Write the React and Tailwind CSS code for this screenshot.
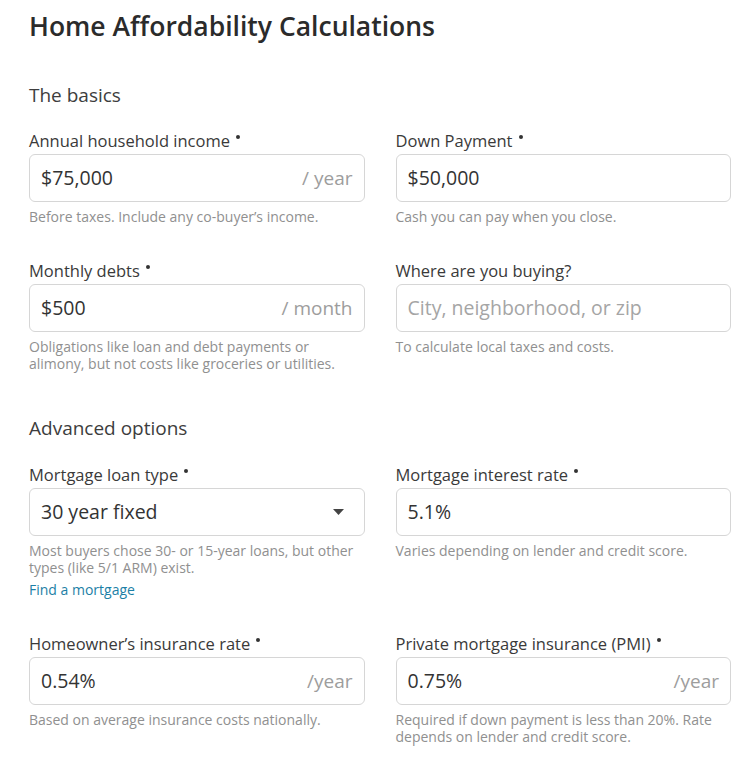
import React from "react";

const Field = ({ label, required, value, placeholder, suffix, select, help, link }) => {
  return (
    <div className="flex flex-col">
      <div className="text-[16.5px] leading-[20px] text-[#3a3a3a]">
        {label}
        {required && <span className="relative -top-[8px] ml-[6px] inline-block h-[4px] w-[4px] rounded-full bg-[#333]" />}
      </div>
      <div className="mt-[3px] flex h-[48px] items-center justify-between rounded-[6px] border border-[#d6d6d6] bg-white px-[11px]">
        <span className={`text-[19.5px] ${value ? "text-[#333]" : "text-[#a5a5a5]"}`}>{value || placeholder}</span>
        {suffix && <span className="text-[19px] text-[#9d9d9d]">{suffix}</span>}
        {select && (
          <svg width="11" height="6" viewBox="0 0 11 6" className="mr-[9px]">
            <path d="M0 0h11L5.5 6z" fill="#444" />
          </svg>
        )}
      </div>
      {help && <p className="mt-[6px] text-[14px] leading-[17px] text-[#909090]">{help}</p>}
      {link && <a className="mt-[5px] text-[14px] leading-[17px] text-[#1c7fa6]">{link}</a>}
    </div>
  );
};

export default function App() {
  return (
    <div className="min-h-[758px] w-[742px] bg-white pl-[29px] pr-[11px] pt-[9px]" style={{ fontFamily: '"Open Sans", "Liberation Sans", sans-serif' }}>
      <h1 className="text-[26.5px] font-semibold leading-[34px] text-[#2b2b2b]">Home Affordability Calculations</h1>

      <h2 className="mt-[40px] text-[19px] leading-[24px] text-[#3d3d3d]">The basics</h2>
      <div className="mt-[24px] grid grid-cols-2 gap-x-[31px] gap-y-[36px]">
        <Field label="Annual household income" required value="$75,000" suffix="/ year" help="Before taxes. Include any co-buyer’s income." />
        <Field label="Down Payment" required value="$50,000" help="Cash you can pay when you close." />
        <Field label="Monthly debts" required value="$500" suffix="/ month" help="Obligations like loan and debt payments or alimony, but not costs like groceries or utilities." />
        <Field label="Where are you buying?" placeholder="City, neighborhood, or zip" help="To calculate local taxes and costs." />
      </div>

      <h2 className="mt-[44px] text-[19px] leading-[24px] text-[#3d3d3d]">Advanced options</h2>
      <div className="mt-[25px] grid grid-cols-2 gap-x-[31px] gap-y-[36px]">
        <Field label="Mortgage loan type" required value="30 year fixed" select help="Most buyers chose 30- or 15-year loans, but other types (like 5/1 ARM) exist." link="Find a mortgage" />
        <Field label="Mortgage interest rate" required value="5.1%" help="Varies depending on lender and credit score." />
        <Field label="Homeowner’s insurance rate" required value="0.54%" suffix="/year" help="Based on average insurance costs nationally." />
        <Field label="Private mortgage insurance (PMI)" required value="0.75%" suffix="/year" help="Required if down payment is less than 20%. Rate depends on lender and credit score." />
      </div>
    </div>
  );
}
